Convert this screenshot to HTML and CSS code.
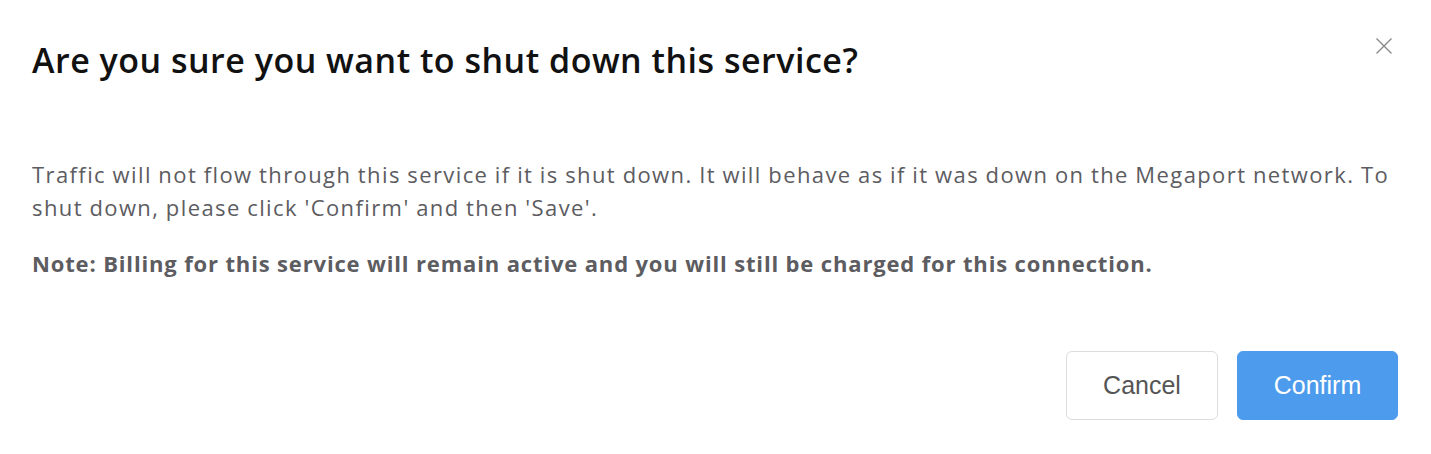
FILE: index.html
```
<html>
<head>
    <title>Shut down service</title>
    <link rel="stylesheet" href="styles.css">
</head>
<body>
    <div class="modal">
        <div class="modal-header">
            <h2 class="modal-title">Are you sure you want to shut down this service?</h2>
            <button class="close-btn" aria-label="Close">
                <svg width="16" height="16" viewBox="0 0 16 16">
                    <path d="M0.5 0.5 L15.5 15.5 M15.5 0.5 L0.5 15.5" stroke="#8a8a8e" stroke-width="1.4" fill="none"/>
                </svg>
            </button>
        </div>
        <div class="modal-body">
            <p>Traffic will not flow through this service if it is shut down. It will behave as if it was down on the Megaport network. To shut down, please click 'Confirm' and then 'Save'.</p>
            <p class="note">Note: Billing for this service will remain active and you will still be charged for this connection.</p>
        </div>
        <div class="modal-footer">
            <button class="btn btn-default">Cancel</button>
            <button class="btn btn-primary">Confirm</button>
        </div>
    </div>
</body>
</html>
```
FILE: styles.css
```
body {
    margin: 0;
    background: white;
    font-family: "Open Sans", sans-serif;
}
.modal {
    width: 1431px;
    height: 454px;
    box-sizing: border-box;
    padding: 0 33px 0 32px;
}
.modal-header {
    display: flex;
    justify-content: space-between;
    align-items: flex-start;
    padding-top: 40px;
}
.modal-title {
    margin: 0;
    font-size: 34px;
    line-height: 40px;
    font-weight: 600;
    color: #111;
    letter-spacing: 0.5px;
}
.close-btn {
    background: none;
    border: none;
    padding: 0;
    margin: -2px 6px 0 0;
    width: 16px;
    height: 16px;
    line-height: 0;
    cursor: pointer;
}
.modal-body {
    padding-top: 78px;
    color: #5c5c61;
    font-size: 22px;
    line-height: 33px;
    letter-spacing: 1.4px;
    word-spacing: -0.6px;
}
.modal-body p {
    margin: 0;
}
.modal-body .note {
    margin-top: 23px;
    font-weight: 700;
    letter-spacing: 0.85px;
    word-spacing: 0;
}
.modal-footer {
    display: flex;
    justify-content: flex-end;
    gap: 19px;
    margin-top: 71px;
}
.btn {
    height: 69px;
    border-radius: 6px;
    font-family: "Liberation Sans", Arial, sans-serif;
    font-size: 25px;
    cursor: pointer;
}
.btn-default {
    width: 152px;
    background: white;
    border: 1px solid #dcdce0;
    color: #555;
}
.btn-primary {
    width: 161px;
    background: #4d9bec;
    border: 1px solid #4d9bec;
    color: white;
}
```
